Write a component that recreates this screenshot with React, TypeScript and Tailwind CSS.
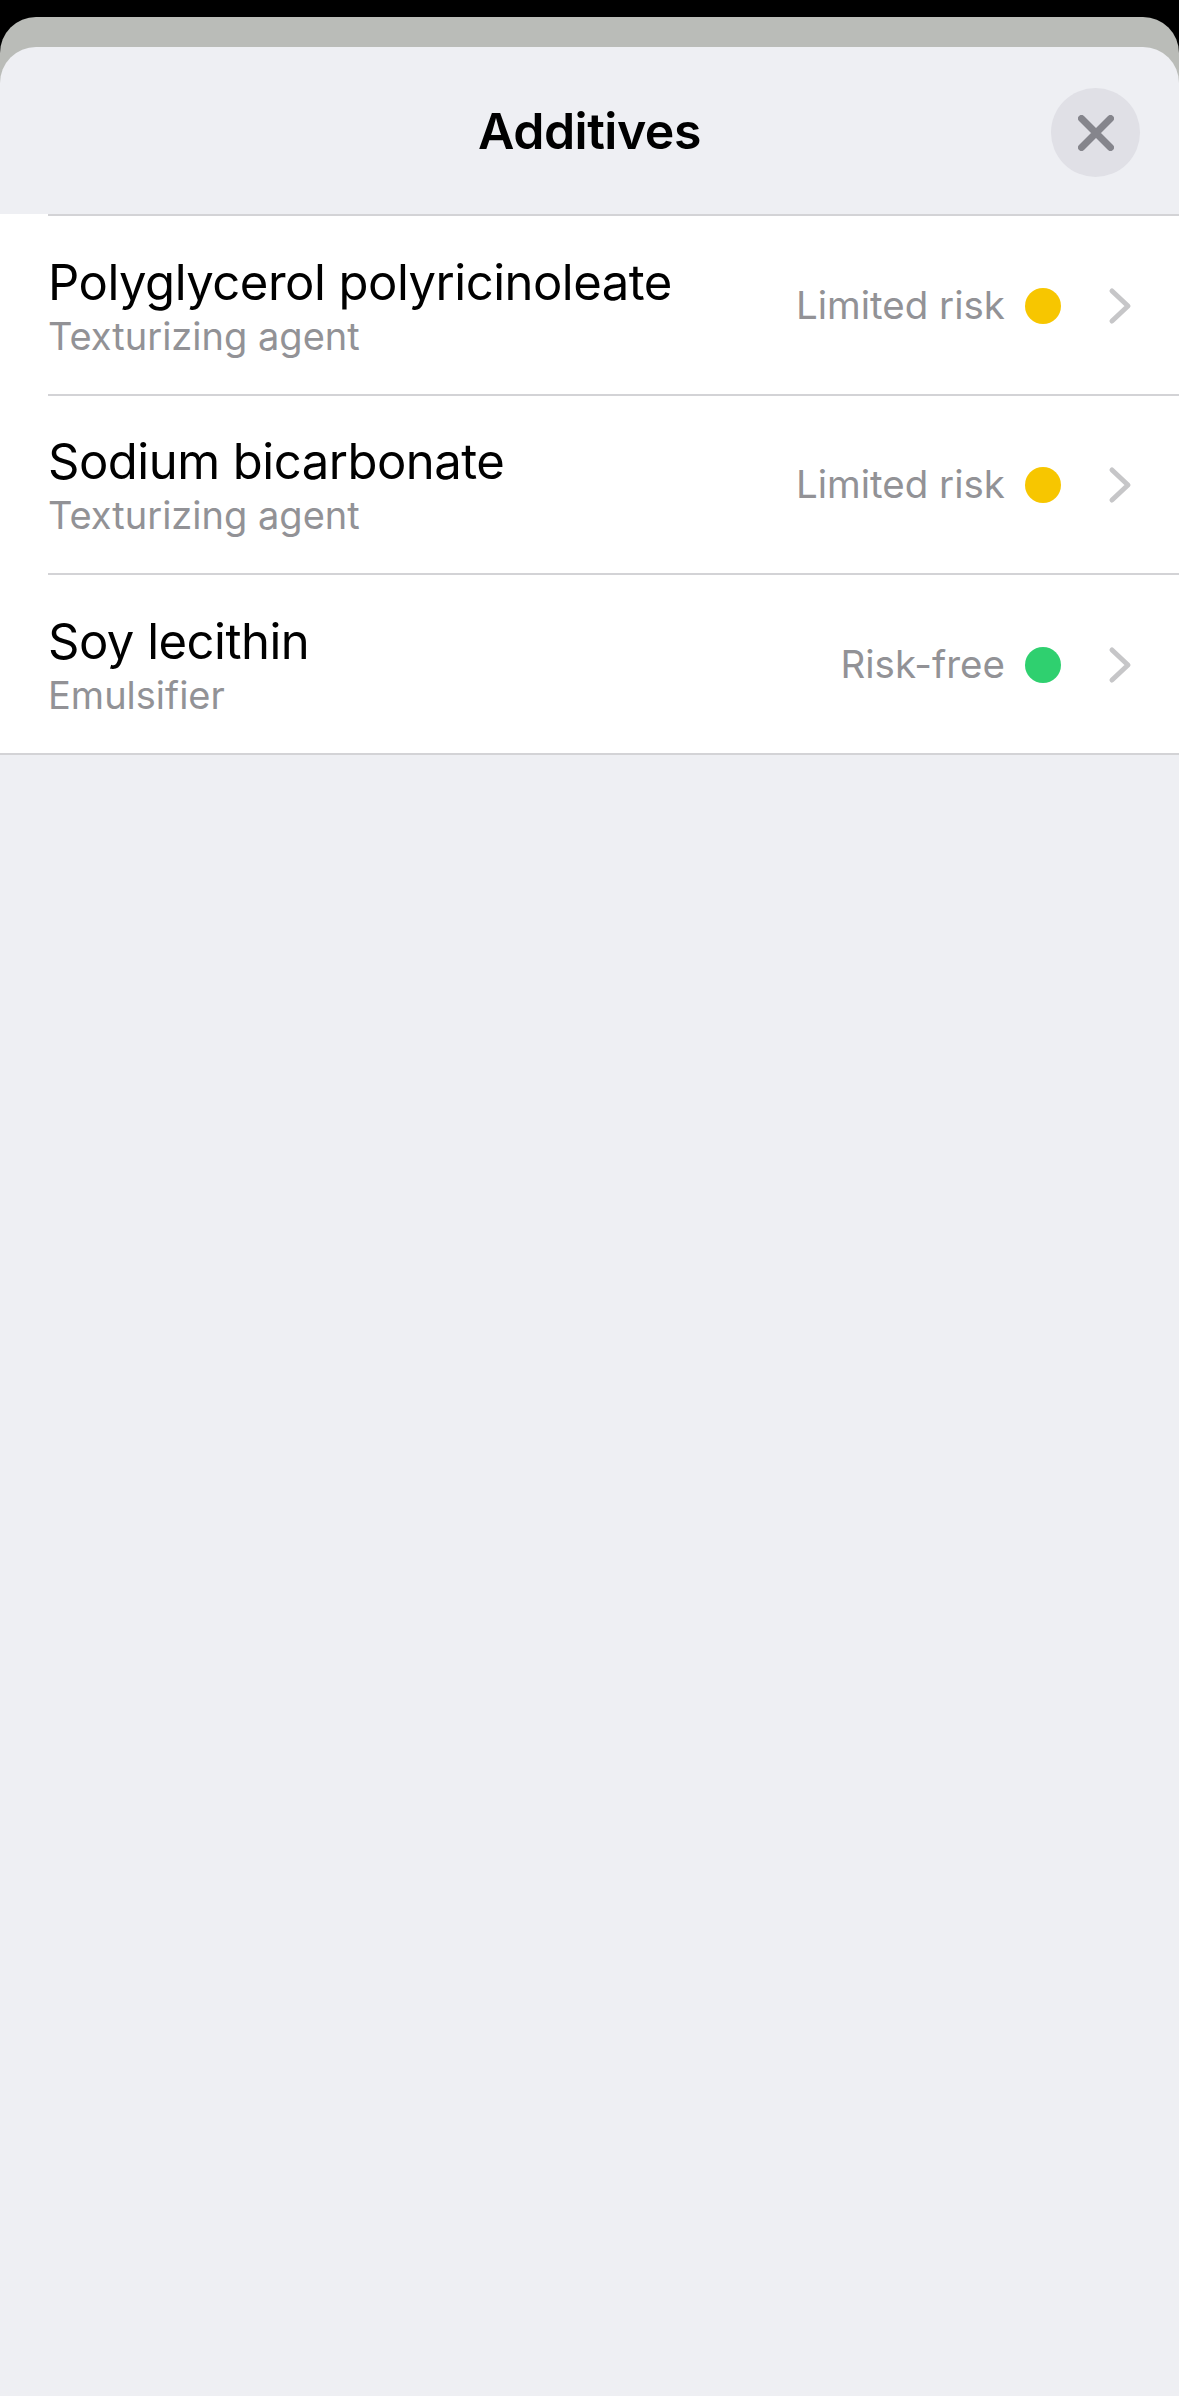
const additives = [
  { name: "Polyglycerol polyricinoleate", type: "Texturizing agent", risk: "Limited risk", dot: "yellow" },
  { name: "Sodium bicarbonate", type: "Texturizing agent", risk: "Limited risk", dot: "yellow" },
  { name: "Soy lecithin", type: "Emulsifier", risk: "Risk-free", dot: "green" },
];

function Row({ item }: { item: (typeof additives)[number] }) {
  return (
    <div className="bg-white pl-12">
      <div className="flex h-[179.5px] items-center border-t-2 border-[#d3d3d6] pr-[47px]">
        <div className="flex-1 pt-[2px]">
          <div className="text-[49px] leading-[58px] tracking-[-0.5px] text-black">{item.name}</div>
          <div className="mt-[2px] text-[38px] leading-[44px] text-[#929296]">{item.type}</div>
        </div>
        <div className="flex items-center pt-[2px]">
          <span className="text-[38.5px] text-[#929296]">{item.risk}</span>
          <span
            className={
              item.dot === "yellow"
                ? "ml-[20px] h-9 w-9 rounded-full bg-[#f7c600]"
                : "ml-[20px] h-9 w-9 rounded-full bg-[#2fd06f]"
            }
          />
          <svg className="ml-[47px]" width="24" height="38" viewBox="0 0 24 38" fill="none">
            <path d="M4 4 L20 19 L4 34" stroke="#c6c6c8" strokeWidth="5" strokeLinecap="round" strokeLinejoin="round" />
          </svg>
        </div>
      </div>
    </div>
  );
}

export default function App() {
  return (
    <div className="h-[2396px] overflow-hidden bg-black pt-[17px] font-['Inter',sans-serif]">
      <div className="h-full rounded-t-[36px] bg-[#babcb8] pt-[30px]">
        <div className="h-full rounded-t-[36px] bg-[#eeeff3]">
          {/* Header */}
          <header className="relative flex h-[167px] items-center justify-center pt-[2px]">
            <h1 className="text-[50px] font-semibold tracking-[-0.5px] text-black">Additives</h1>
            <button className="absolute right-[39px] top-[41px] flex h-[89px] w-[89px] items-center justify-center rounded-full bg-[#e0e0e6]">
              <svg width="36" height="36" viewBox="0 0 36 36" fill="none">
                <path d="M3.5 3.5 L32.5 32.5 M32.5 3.5 L3.5 32.5" stroke="#85858c" strokeWidth="7" strokeLinecap="round" />
              </svg>
            </button>
          </header>

          {/* List */}
          <div className="border-b-2 border-[#d3d3d6]">
            {additives.map((item) => (
              <Row key={item.name} item={item} />
            ))}
          </div>
        </div>
      </div>
    </div>
  );
}
